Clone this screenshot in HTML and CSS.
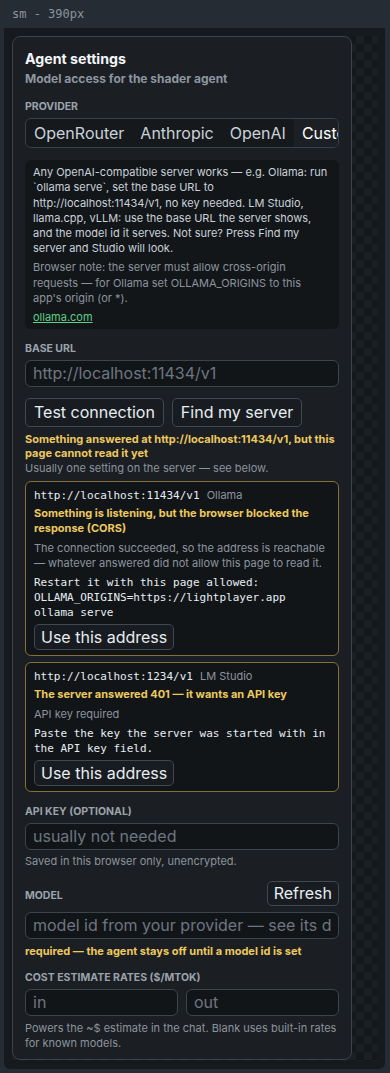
FILE: index.html
```html
<!DOCTYPE html>
<html lang="en">
<head>
    <meta charset="UTF-8">
    <title>Agent settings - sm</title>
    <link rel="stylesheet" href="styles.css">
</head>
<body>
    <div class="frame">
        <div class="frame-title">sm - 390px</div>
        <div class="viewport">
            <div class="stage">
                <section class="panel">
                    <h2>Agent settings</h2>
                    <p class="subtitle">Model access for the shader agent</p>

                    <!-- provider -->
                    <div class="field first">
                        <div class="label">Provider</div>
                        <div class="tabs">
                            <button class="tab">OpenRouter</button>
                            <button class="tab">Anthropic</button>
                            <button class="tab">OpenAI</button>
                            <button class="tab active">Custom</button>
                        </div>
                    </div>

                    <div class="info">
                        <p>Any OpenAI-compatible server works — e.g. Ollama: run `ollama serve`, set the base URL to http://localhost:11434/v1, no key needed. LM Studio, llama.cpp, vLLM: use the base URL the server shows, and the model id it serves. Not sure? Press Find my server and Studio will look.</p>
                        <p class="muted">Browser note: the server must allow cross-origin requests — for Ollama set OLLAMA_ORIGINS to this app's origin (or *).</p>
                        <p><a href="#">ollama.com</a></p>
                    </div>

                    <!-- base url -->
                    <div class="field">
                        <div class="label">Base URL</div>
                        <input type="text" placeholder="http://localhost:11434/v1">
                        <div class="actions">
                            <button class="btn">Test connection</button>
                            <button class="btn">Find my server</button>
                        </div>
                        <div class="warn">Something answered at http://localhost:11434/v1, but this page cannot read it yet</div>
                        <div class="hint">Usually one setting on the server — see below.</div>

                        <div class="probe">
                            <div class="probe-head"><code>http://localhost:11434/v1</code> <span>Ollama</span></div>
                            <div class="warn">Something is listening, but the browser blocked the response (CORS)</div>
                            <div class="probe-text">The connection succeeded, so the address is reachable — whatever answered did not allow this page to read it.</div>
                            <pre>Restart it with this page allowed:
OLLAMA_ORIGINS=https://lightplayer.app
ollama serve</pre>
                            <button class="btn small">Use this address</button>
                        </div>

                        <div class="probe">
                            <div class="probe-head"><code>http://localhost:1234/v1</code> <span>LM Studio</span></div>
                            <div class="warn">The server answered 401 — it wants an API key</div>
                            <div class="probe-text">API key required</div>
                            <pre>Paste the key the server was started with in
the API key field.</pre>
                            <button class="btn small">Use this address</button>
                        </div>
                    </div>

                    <!-- api key -->
                    <div class="field">
                        <div class="label">API key (optional)</div>
                        <input type="password" placeholder="usually not needed">
                        <div class="hint">Saved in this browser only, unencrypted.</div>
                    </div>

                    <!-- model -->
                    <div class="field model">
                        <div class="label-row">
                            <div class="label">Model</div>
                            <button class="btn refresh">Refresh</button>
                        </div>
                        <input type="text" placeholder="model id from your provider — see its docs">
                        <div class="warn">required — the agent stays off until a model id is set</div>
                    </div>

                    <!-- rates -->
                    <div class="field">
                        <div class="label">Cost estimate rates ($/MTok)</div>
                        <div class="rates">
                            <input type="text" placeholder="in">
                            <input type="text" placeholder="out">
                        </div>
                        <div class="hint">Powers the ~$ estimate in the chat. Blank uses built-in rates for known models.</div>
                    </div>
                </section>
            </div>
        </div>
    </div>
</body>
</html>
```

FILE: styles.css
```css
body {
    margin: 0;
    background-color: #262c33;
    font-family: Inter, "Noto Sans", sans-serif;
    color: #e6edf3;
}
.frame {
    height: 1073px;
    padding: 0 5px 0 4px;
    box-sizing: border-box;
}
.frame-title {
    height: 28px;
    line-height: 28px;
    padding-left: 8px;
    font-family: "DejaVu Sans Mono", monospace;
    font-size: 12px;
    color: #8b949e;
}
.viewport {
    height: 1041px;
    box-sizing: border-box;
    padding: 8px 7px 8px 8px;
    background-color: #161a1e;
    border-radius: 0 0 6px 6px;
}
.stage {
    height: 1025px;
    background: repeating-conic-gradient(#1b2025 0 25%, #14181b 0 50%) 0 0 / 16px 16px;
}
.panel {
    width: 340px;
    height: 1024px;
    box-sizing: border-box;
    padding: 12px;
    background: #1b1e22;
    border: 1px solid #3d434a;
    border-radius: 8px;
}
h2 {
    margin: 0;
    font-size: 14.2px;
    line-height: 20px;
    font-weight: 700;
    color: #f3f6f9;
}
.subtitle {
    margin: 0;
    font-size: 12px;
    line-height: 19px;
    font-weight: 700;
    color: #8d96a0;
}
.field {
    margin-top: 13px;
}
.field.first {
    margin-top: 12px;
}
.field.model {
    margin-top: 12px;
}
.label {
    font-size: 10.5px;
    line-height: 14px;
    font-weight: 700;
    text-transform: uppercase;
    color: #9aa3ad;
    margin-bottom: 4px;
}
.tabs {
    display: flex;
    height: 30px;
    box-sizing: border-box;
    overflow: hidden;
    background: #16191c;
    border: 1px solid #3a4047;
    border-radius: 6px;
}
.tab {
    flex: none;
    padding: 0 8px;
    background: none;
    border: none;
    font-family: inherit;
    font-size: 16px;
    color: #c9d1d9;
}
.tab.active {
    color: #ffffff;
    background: #1c2024;
}
.info {
    margin-top: 12px;
    padding: 5px 8px 4px;
    background: #131619;
    border-radius: 6px;
    font-size: 11px;
    line-height: 15.3px;
    color: #c9d1d9;
}
.info p {
    margin: 0 0 3.5px;
}
.info p:last-child {
    margin-bottom: 0;
}
.info .muted {
    color: #8b949e;
}
.info a {
    color: #5fcf86;
}
input {
    display: block;
    width: 100%;
    height: 27px;
    box-sizing: border-box;
    padding: 0 7px;
    background: #121518;
    border: 1px solid #3d444c;
    border-radius: 6px;
    font-family: inherit;
    font-size: 16px;
    color: #e6edf3;
}
input::placeholder {
    color: #6e7681;
}
.actions {
    display: flex;
    gap: 8px;
    margin-top: 11px;
}
.btn {
    height: 29px;
    padding: 0 8px;
    background: #181c20;
    border: 1px solid #41484f;
    border-radius: 5px;
    font-family: inherit;
    font-size: 16px;
    color: #e6edf3;
}
.warn {
    margin-top: 5px;
    font-size: 11px;
    line-height: 14px;
    font-weight: 700;
    color: #ecc95f;
}
.hint {
    margin-top: 2px;
    font-size: 11px;
    line-height: 15px;
    color: #8b949e;
}
.field > .warn + .hint {
    margin-top: 1px;
}
.field > input + .hint {
    margin-top: 4px;
}
.probe {
    margin-top: 6px;
    padding: 6px 8px 5px;
    background: #121518;
    border: 1px solid #83703a;
    border-radius: 6px;
}
.hint + .probe {
    margin-top: 5px;
}
.probe-head {
    font-size: 11px;
    line-height: 15px;
    color: #8b949e;
}
.probe-head code {
    font-family: "DejaVu Sans Mono", monospace;
    font-size: 11px;
    color: #e6edf3;
    margin-right: 4px;
}
.probe .warn {
    margin-top: 3px;
    line-height: 15px;
}
.probe-text {
    margin-top: 5px;
    font-size: 11px;
    line-height: 15px;
    color: #8b949e;
}
pre {
    margin: 4px 0 0;
    font-family: "DejaVu Sans Mono", monospace;
    font-size: 11px;
    line-height: 15px;
    color: #e6edf3;
    white-space: pre-wrap;
}
.btn.small {
    height: 26px;
    margin-top: 4px;
    padding: 0 6px;
}
.label-row {
    display: flex;
    justify-content: space-between;
    align-items: center;
    margin-bottom: 6px;
}
.label-row .label {
    margin-bottom: 0;
    padding-top: 5px;
}
.btn.refresh {
    height: 25px;
    padding: 0 6px;
}
.rates {
    display: flex;
    gap: 8px;
}
.rates input {
    flex: 1;
    min-width: 0;
}
.field > .rates + .hint {
    margin-top: 5px;
}
```
